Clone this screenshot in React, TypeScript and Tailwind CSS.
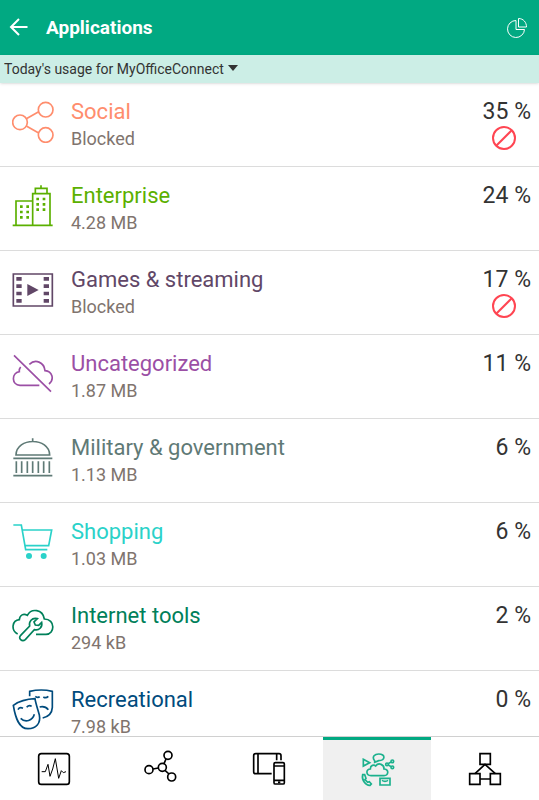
import type { ReactNode } from 'react';

const NoEntry = () => (
  <svg viewBox="0 0 24 24" className="mr-[15px] size-6" fill="none" stroke="#ff4552" strokeWidth="2" role="img" aria-label="Blocked">
    <circle cx="12" cy="12" r="11" />
    <path d="M4.5 19.5l15-15" />
  </svg>
);

interface Category {
  name: string;
  detail: string;
  percent: number;
  color: string;
  icon: ReactNode;
}

const categories: Category[] = [
  {
    name: 'Social',
    detail: 'Blocked',
    percent: 35,
    color: 'text-[#ff8d6d]',
    icon: (
      <>
        <circle cx="24" cy="64" r="22" />
        <circle cx="101" cy="26" r="22" />
        <circle cx="101" cy="102" r="22" />
        <path d="M43 53l37-21M43 75l37 21" />
      </>
    ),
  },
  {
    name: 'Enterprise',
    detail: '4.28 MB',
    percent: 24,
    color: 'text-[#5bb000]',
    icon: (
      <>
        <path d="M2 121h120M12 121V48h50M62 121V26h52v95M70 26V10h35v16M87 10V1" />
        <path
          strokeWidth="8"
          strokeDasharray="8 8"
          d="M28 61v40M47 61v40M77 38v40M96 38v40"
        />
      </>
    ),
  },
  {
    name: 'Games & streaming',
    detail: 'Blocked',
    percent: 17,
    color: 'text-[#614767]',
    icon: (
      <>
        <path d="M4 15h117v96H4z" />
        <path strokeWidth="16" strokeDasharray="11 11" d="M21 24v77M103 24v77" />
        <path fill="currentColor" stroke="none" d="M46 45l34 18-34 18z" />
      </>
    ),
  },
  {
    name: 'Uncategorized',
    detail: '1.87 MB',
    percent: 11,
    color: 'text-[#9b4fa5]',
    icon: (
      <path d="M6 7l111 109M26 42q-5 6-4 14C-2 60-2 96 24 97h58M52 34c18-17 44-7 47 19 22 2 29 26 12 40" />
    ),
  },
  {
    name: 'Military & government',
    detail: '1.13 MB',
    percent: 6,
    color: 'text-[#5f7a76]',
    icon: (
      <>
        <path d="M12 54h101C112 0 13 0 12 54zM62 4v10M4 64h117M4 116h117" />
        <path d="M13 73v35M29 73v35M46 73v35M62 73v35M79 73v35M95 73v35M112 73v35" />
      </>
    ),
  },
  {
    name: 'Shopping',
    detail: '1.03 MB',
    percent: 6,
    color: 'text-[#2ad2c9]',
    icon: (
      <>
        <path d="M4 12h24l13 74h65M31 27h88l-9 47H39" />
        <circle cx="51" cy="105" r="9" fill="currentColor" stroke="none" />
        <circle cx="95" cy="105" r="9" fill="currentColor" stroke="none" />
      </>
    ),
  },
  {
    name: 'Internet tools',
    detail: '294 kB',
    percent: 2,
    color: 'text-[#00805a]',
    icon: (
      <>
        <path d="M17 87C-4 76 0 46 22 44c1-14 13-20 24-13 12-22 46-19 51 11 34 0 32 46 5 46H72" />
        <path d="M26 91l27-28c-3-13 6-26 23-22L66 51l4 9 10 1 9-9c3 14-8 26-22 22l-27 30c-10 8-23-4-14-13z" />
      </>
    ),
  },
  {
    name: 'Recreational',
    detail: '7.98 kB',
    percent: 0,
    color: 'text-[#004b7d]',
    icon: (
      <>
        <path d="M4 49c18-13 40-19 65-20 2 14 8 31 13 49 5 25-10 41-34 41-28 0-38-34-44-70z" />
        <path d="M53 22V7q35-8 68 0v48c-1 19-12 28-29 32M83 54q16-4 26 8" />
        <path d="M18 62q5-9 15-4M44 55q7-9 15-3M26 88c14 14 36 7 41-12M70 22q8 6 13 1M94 24q8 5 15-2" />
      </>
    ),
  },
];

interface Tab {
  label: string;
  icon: ReactNode;
  active?: boolean;
}

const tabs: Tab[] = [
  {
    label: 'Health',
    icon: (
      <>
        <rect x="2" y="2" width="92" height="92" rx="8" />
        <path strokeWidth="3" d="M11 56h11l8-22 6 36 8-22 8-31 10 59 8-23 6 6 8-3" />
      </>
    ),
  },
  {
    label: 'Clients',
    icon: (
      <g transform="translate(-5 -4)">
        <circle cx="14" cy="54" r="12" />
        <circle cx="54" cy="47" r="12" />
        <circle cx="71" cy="11" r="12" />
        <circle cx="82" cy="76" r="12" />
        <path d="M26 52l16-3M59 36l6-14M62 56l12 11" />
      </g>
    ),
  },
  {
    label: 'Devices',
    icon: (
      <>
        <path d="M84 22V8q0-6-6-6H8Q2 2 2 8v48q0 6 6 6h48M15 2v60M71 2v20" />
        <rect x="63" y="29" width="31" height="64" rx="4" />
        <path d="M63 39h31M63 82h31M75 88h7" />
      </>
    ),
  },
  {
    label: 'Applications',
    active: true,
    icon: (
      <g transform="translate(3 0)">
        <path d="M27 68c-16 0-16-20-2-20 0-12 11-14 16-9 9-12 26-4 25 9 16 0 14 20 0 20z" />
        <path d="M4 19l19 10L4 39zM38 23c-10-12 1-20 12-20 22 0 20 20 0 20l-12 5z" />
        <circle cx="75" cy="34" r="4" />
        <circle cx="91" cy="25" r="4" />
        <circle cx="91" cy="43" r="4" />
        <path d="M79 32l8-5M79 36l8 5M54 76h30v20H54zM60 82q9 6 18 0" />
        <path d="M2 65l6 0 4 11-3 4 8 8 5-2 6 7-4 4C12 98-2 82 2 65z" />
      </g>
    ),
  },
  {
    label: 'Network',
    icon: (
      <>
        <path d="M33 2h31v32H33zM2 62h31v32H2zM64 62h30v32H64z" />
        <path d="M18 62l30-28 31 28M33 78h31" />
      </>
    ),
  },
];

export default function App() {
  return (
    <div className="flex h-screen flex-col bg-white font-[Roboto,sans-serif] text-[#333333]">
      <header className="flex h-[55px] shrink-0 items-center bg-[#01a982] px-2 text-white">
        <button aria-label="Back" className="mr-[18px] w-5">
          <svg viewBox="0 0 20 20" className="size-5" fill="none" stroke="currentColor" strokeWidth="2">
            <path d="M19.500 9H3M11 1L3 9l8 8" />
          </svg>
        </button>
        <h1 className="pt-0.5 text-[19px] font-bold">Applications</h1>
        <button aria-label="Chart view" className="ml-auto mr-[3px]">
          <svg viewBox="0 0 22 22" className="size-[22px]" fill="none" stroke="currentColor" strokeWidth="1">
            <path d="M10 3.500a8.500 8.500 0 1 0 8.500 9H10z" />
            <path d="M12.500 1.500c5 0 8 4 8 8.500h-8z" />
          </svg>
        </button>
      </header>

      <div className="relative z-10 flex h-7 shrink-0 items-center bg-[#cceee6] px-1 shadow">
        <select aria-label="Usage scope" className="appearance-none bg-transparent text-sm">
          <option>Today's usage for MyOfficeConnect</option>
        </select>
        <svg viewBox="0 0 10 6" className="mb-0.5 ml-1 h-1.5 w-2.5" fill="currentColor">
          <path d="M0 0h10L5 6z" />
        </svg>
      </div>

      <main className="min-h-0 flex-1 overflow-y-auto [scrollbar-width:none]">
        <ul>
          {categories.map((category) => (
            <li key={category.name} className="flex h-[84px] border-b border-[#dcdcdc] pt-[15px] pr-2 pl-3">
              <svg
                viewBox="0 0 126 126"
                className={`mt-[3px] mr-[17px] size-[42px] shrink-0 ${category.color}`}
                fill="none"
                stroke="currentColor"
                strokeWidth="5"
              >
                {category.icon}
              </svg>
              <div className="min-w-0 flex-1">
                <h2 className={`text-[22px] leading-[27px] ${category.color}`}>{category.name}</h2>
                <p className="text-lg leading-7 text-[#80746e]">{category.detail}</p>
              </div>
              <div className="flex flex-col items-end">
                <span className="text-[23px] leading-7">{category.percent} %</span>
                {category.detail === 'Blocked' && <NoEntry />}
              </div>
            </li>
          ))}
        </ul>
      </main>

      <nav className="grid h-16 shrink-0 grid-cols-5 border-t border-[#d0d0d0]">
        {tabs.map((tab) => (
          <button
            key={tab.label}
            aria-label={tab.label}
            className={`flex items-center justify-center border-t-3 pb-[3px] ${
              tab.active ? 'border-[#01a982] bg-[#f0f0f0] text-[#1bb18d]' : 'border-transparent text-black'
            }`}
          >
            <svg viewBox="0 0 96 96" className="size-8 overflow-visible" fill="none" stroke="currentColor" strokeWidth="5">
              {tab.icon}
            </svg>
          </button>
        ))}
      </nav>
    </div>
  );
}
